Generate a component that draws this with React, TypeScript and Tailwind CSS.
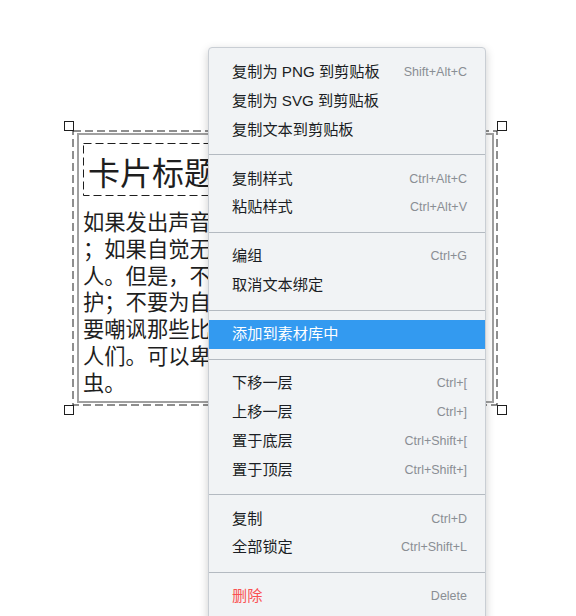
import React from "react";

const bodyLines = [
  "如果发出声音是危险的，那就沉默",
  "；如果自觉无力发光的，那就别去照亮别",
  "人。但是，不要习惯了黑暗就为黑暗辩",
  "护；不要为自己的苟且而得意洋洋；不",
  "要嘲讽那些比自己更勇敢、更有热量的",
  "人们。可以卑微如尘土，不可扭曲如蛆",
  "虫。",
];

type Item =
  | { type: "item"; label: string; shortcut?: string; active?: boolean; danger?: boolean }
  | { type: "sep" };

const items: Item[] = [
  { type: "item", label: "复制为 PNG 到剪贴板", shortcut: "Shift+Alt+C" },
  { type: "item", label: "复制为 SVG 到剪贴板" },
  { type: "item", label: "复制文本到剪贴板" },
  { type: "sep" },
  { type: "item", label: "复制样式", shortcut: "Ctrl+Alt+C" },
  { type: "item", label: "粘贴样式", shortcut: "Ctrl+Alt+V" },
  { type: "sep" },
  { type: "item", label: "编组", shortcut: "Ctrl+G" },
  { type: "item", label: "取消文本绑定" },
  { type: "sep" },
  { type: "item", label: "添加到素材库中", active: true },
  { type: "sep" },
  { type: "item", label: "下移一层", shortcut: "Ctrl+[" },
  { type: "item", label: "上移一层", shortcut: "Ctrl+]" },
  { type: "item", label: "置于底层", shortcut: "Ctrl+Shift+[" },
  { type: "item", label: "置于顶层", shortcut: "Ctrl+Shift+]" },
  { type: "sep" },
  { type: "item", label: "复制", shortcut: "Ctrl+D" },
  { type: "item", label: "全部锁定", shortcut: "Ctrl+Shift+L" },
  { type: "sep" },
  { type: "item", label: "删除", shortcut: "Delete", danger: true },
];

function Handle({ className }: { className: string }) {
  return <div className={`absolute w-[10px] h-[10px] bg-white border border-[#1e1e1e] ${className}`} />;
}

export default function App() {
  return (
    <div
      className="relative w-[576px] h-[616px] overflow-hidden bg-white"
      style={{ fontFamily: '"Liberation Sans", "Noto Sans CJK SC", sans-serif' }}
    >
      {/* canvas: text card (element on a free canvas) */}
      <div
        className="absolute left-[77px] top-[133px] w-[417px] h-[270px] border-2 border-[#a0a0a0] flex flex-col pl-[4px] pt-[8px] text-[#1e1e1e]"
        style={{ fontFamily: '"Noto Sans CJK SC", sans-serif' }}
      >
        <div className="relative w-[200px] h-[53px] shrink-0 flex items-start pl-[5px] pt-[8px]">
          <svg className="absolute left-0 top-0" width="200" height="53">
            <rect x="0.5" y="0.5" width="199" height="52" fill="none" stroke="#1e1e1e" strokeWidth="1" strokeDasharray="8 4" />
          </svg>
          <span className="text-[32px] leading-[40px] whitespace-nowrap">卡片标题</span>
        </div>
        <div className="flex flex-col mt-[12px] text-[21.3px] leading-[26.75px]">
          {bodyLines.map((l, i) => (
            <div key={i} className="whitespace-nowrap">
              {l}
            </div>
          ))}
        </div>
      </div>

      {/* selection dashed rect */}
      <svg className="absolute left-[72px] top-[130px]" width="427" height="277">
        <rect x="1" y="1" width="424" height="274" fill="none" stroke="#1e1e1e" strokeWidth="1" strokeDasharray="8 4" />
      </svg>
      <Handle className="left-[64px] top-[121px]" />
      <Handle className="left-[497px] top-[121px]" />
      <Handle className="left-[64px] top-[405px]" />
      <Handle className="left-[497px] top-[405px]" />

      {/* context menu */}
      <div className="absolute left-[208px] top-[47px] w-[278px] h-[600px] rounded-[4px] border border-[#c9ced4] bg-[#f1f3f5] shadow-[0_3px_10px_rgba(0,0,0,0.2)] pt-[10px] flex flex-col">
        {items.map((it, i) =>
          it.type === "sep" ? (
            <div key={i} className="h-px my-[9.6px] bg-[#b4bac1] shrink-0" />
          ) : (
            <div
              key={i}
              className={`h-[28.8px] shrink-0 flex items-center justify-between pl-[23px] pr-[18px] ${
                it.active ? "bg-[#339af0] text-white" : it.danger ? "text-[#fa5252]" : "text-[#1b1e24]"
              }`}
            >
              <span className="text-[15.2px] whitespace-nowrap">{it.label}</span>
              {it.shortcut && (
                <span
                  className={`text-[12.5px] whitespace-nowrap ${it.active ? "text-white/70" : "text-[#8a8e94]"}`}
                  style={{ fontFamily: '"Liberation Sans", sans-serif' }}
                >
                  {it.shortcut}
                </span>
              )}
            </div>
          )
        )}
      </div>
    </div>
  );
}
